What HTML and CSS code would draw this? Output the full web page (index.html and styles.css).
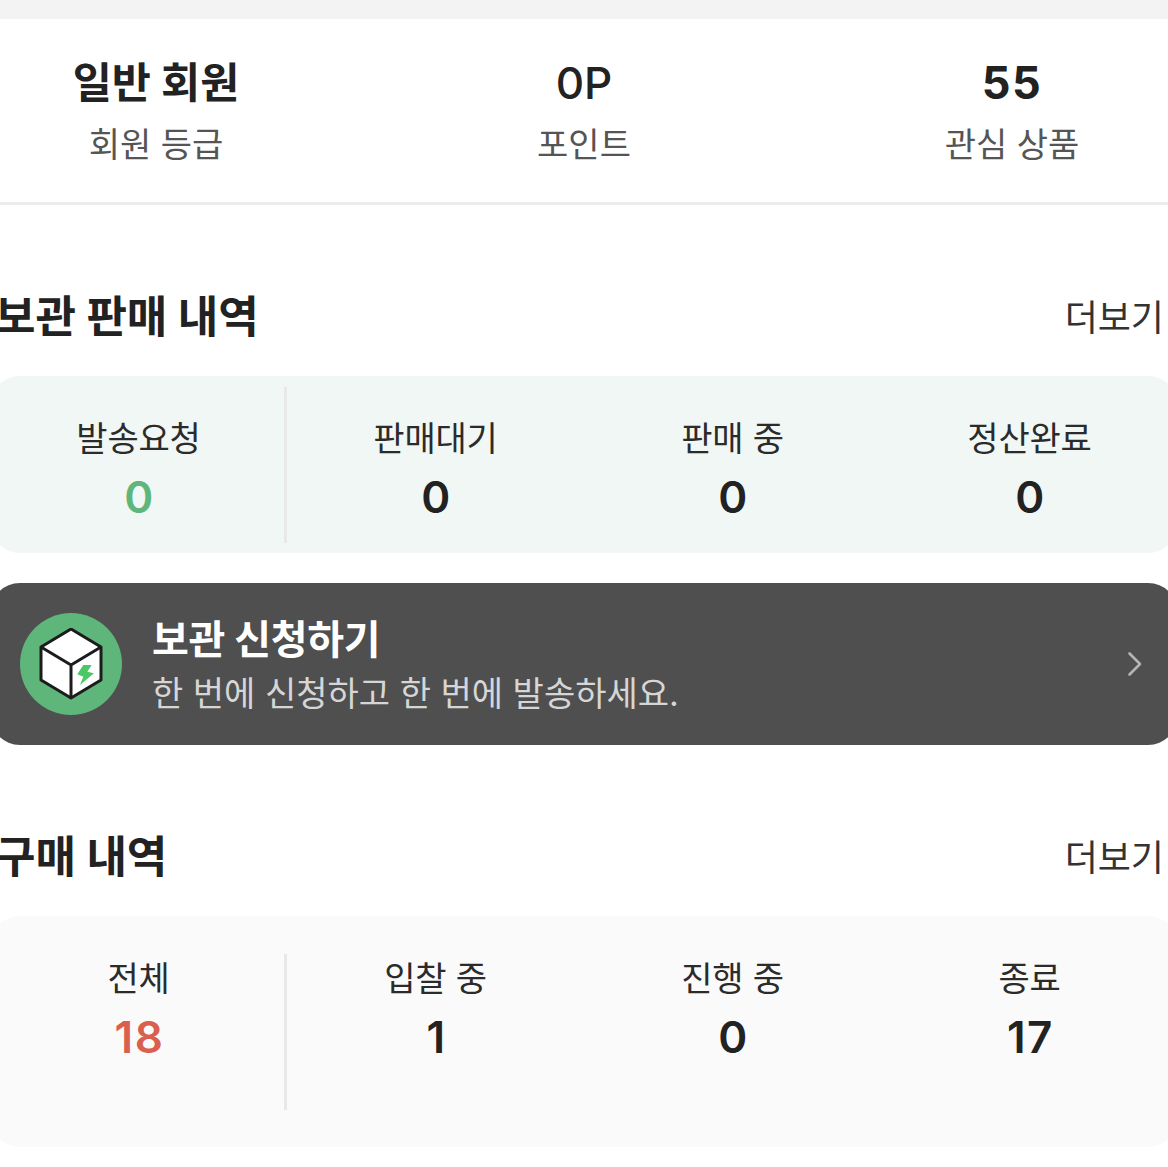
FILE: index.html
```html
<html>
  <head>
    <title>마이페이지</title>
    <link rel="stylesheet" href="styles.css">
  </head>
  <body>
    <div class="top-bar"></div>

    <div class="summary">
      <div class="summary-item">
        <strong class="summary-value">일반 회원</strong>
        <span class="summary-label">회원 등급</span>
      </div>
      <div class="summary-item">
        <strong class="summary-value summary-regular">0P</strong>
        <span class="summary-label">포인트</span>
      </div>
      <div class="summary-item">
        <strong class="summary-value summary-count">55</strong>
        <span class="summary-label">관심 상품</span>
      </div>
    </div>

    <div class="section-head head-storage">
      <h2>보관 판매 내역</h2>
      <a class="more">더보기</a>
    </div>
    <div class="stats stats-green">
      <div class="stat stat-first">
        <span class="stat-label">발송요청</span>
        <span class="stat-num num-green">0</span>
      </div>
      <div class="stat">
        <span class="stat-label">판매대기</span>
        <span class="stat-num">0</span>
      </div>
      <div class="stat">
        <span class="stat-label">판매 중</span>
        <span class="stat-num">0</span>
      </div>
      <div class="stat">
        <span class="stat-label">정산완료</span>
        <span class="stat-num">0</span>
      </div>
    </div>

    <div class="banner">
      <div class="banner-icon">
        <svg width="72" height="72" viewBox="0 0 72 72">
          <path d="M36 1 L66 19 V52 L36 70 L6 52 V19 Z" fill="#fff" stroke="#1c1c1c" stroke-width="3" stroke-linejoin="round"/>
          <path d="M6 19 L36 37 L66 19 M36 37 V70" fill="none" stroke="#1c1c1c" stroke-width="3" stroke-linejoin="round"/>
          <path d="M48.300 37 H56.700 L52.300 43.700 L59 45.300 L45 57 L48.300 48.700 L42.300 46.300 Z" fill="#4cc765"/>
        </svg>
      </div>
      <div class="banner-text">
        <strong class="banner-title">보관 신청하기</strong>
        <span class="banner-sub">한 번에 신청하고 한 번에 발송하세요.</span>
      </div>
      <svg class="chevron" width="16" height="26" viewBox="0 0 16 26">
        <path d="M2.500 2.500 L13 13 L2.500 23.500" fill="none" stroke="#b5b5b5" stroke-width="2.600" stroke-linecap="round" stroke-linejoin="round"/>
      </svg>
    </div>

    <div class="section-head head-buy">
      <h2>구매 내역</h2>
      <a class="more">더보기</a>
    </div>
    <div class="stats stats-gray">
      <div class="stat stat-first">
        <span class="stat-label">전체</span>
        <span class="stat-num num-red">18</span>
      </div>
      <div class="stat">
        <span class="stat-label">입찰 중</span>
        <span class="stat-num">1</span>
      </div>
      <div class="stat">
        <span class="stat-label">진행 중</span>
        <span class="stat-num">0</span>
      </div>
      <div class="stat">
        <span class="stat-label">종료</span>
        <span class="stat-num">17</span>
      </div>
    </div>
  </body>
</html>
```

FILE: styles.css
```css
html,
body {
  margin: 0;
  overflow: hidden;
}

body {
  width: 1168px;
  height: 1167px;
  background: #fff;
  color: #222;
  font-family: Inter, "Noto Sans CJK KR", sans-serif;
}

.top-bar {
  height: 19px;
  background: #f3f3f3;
}

.summary {
  display: flex;
  justify-content: center;
  height: 183px;
  border-bottom: 3px solid #ececec;
}

.summary-item {
  flex: 0 0 428px;
  display: flex;
  flex-direction: column;
  align-items: center;
  padding-top: 35px;
}

.summary-value {
  font-size: 42.500px;
  line-height: 58px;
  font-weight: 700;
}

.summary-regular {
  font-size: 44px;
  font-weight: 500;
}

.summary-count {
  font-size: 45px;
  letter-spacing: 1.500px;
}

.summary-label {
  margin-top: 8px;
  font-size: 34px;
  line-height: 50px;
  color: #555;
}

.section-head {
  display: flex;
  justify-content: space-between;
  align-items: center;
  height: 60px;
  margin-right: 4px;
  margin-left: -5px;
}

.head-storage {
  margin-top: 82px;
  margin-bottom: 29px;
}

.head-buy {
  margin-top: 82px;
  margin-bottom: 29px;
}

.section-head h2 {
  margin: 0;
  font-size: 44px;
  font-weight: 700;
  line-height: 60px;
}

.more {
  padding-bottom: 5px;
  font-size: 36px;
  color: #333;
}

.stats {
  display: flex;
  width: 1188px;
  margin-left: -10px;
  border-radius: 30px;
}

.stats-green {
  height: 177px;
  background: #f1f7f5;
}

.stats-gray {
  height: 231px;
  background: #fafafa;
}

.stat {
  flex: 1;
  display: flex;
  flex-direction: column;
  align-items: center;
  padding-top: 38px;
  box-sizing: border-box;
  position: relative;
}

.stat-first::after {
  content: "";
  position: absolute;
  top: 11px;
  bottom: 10px;
  right: 0;
  width: 3px;
  background: #e8e8e8;
}

.stats-gray .stat-first::after {
  top: 38px;
  bottom: 37px;
}

.stat-label {
  font-size: 34px;
  line-height: 50px;
  letter-spacing: -0.2px;
  color: #2b2b2b;
}

.stat-num {
  margin-top: -2px;
  padding-left: 2px;
  font-size: 44px;
  line-height: 70px;
  letter-spacing: 1.500px;
  font-weight: 600;
}

.num-green {
  color: #5fb67a;
}

.num-red {
  color: #d9604f;
}

.banner {
  display: flex;
  align-items: center;
  width: 1188px;
  height: 162px;
  box-sizing: border-box;
  margin-top: 30px;
  margin-left: -10px;
  padding-left: 30px;
  padding-right: 35px;
  border-radius: 30px;
  background: #4f4f4f;
}

.banner-icon {
  width: 102px;
  height: 102px;
  flex: none;
  display: flex;
  align-items: center;
  justify-content: center;
  border-radius: 50%;
  background: #5fb67a;
}

.banner-text {
  flex: 1;
  display: flex;
  flex-direction: column;
  margin-left: 30px;
  padding-top: 2px;
}

.banner-title {
  font-size: 40px;
  line-height: 58px;
  letter-spacing: -0.300px;
  font-weight: 700;
  color: #fff;
}

.banner-sub {
  font-size: 34px;
  line-height: 50px;
  color: #d6d6d6;
}
```
